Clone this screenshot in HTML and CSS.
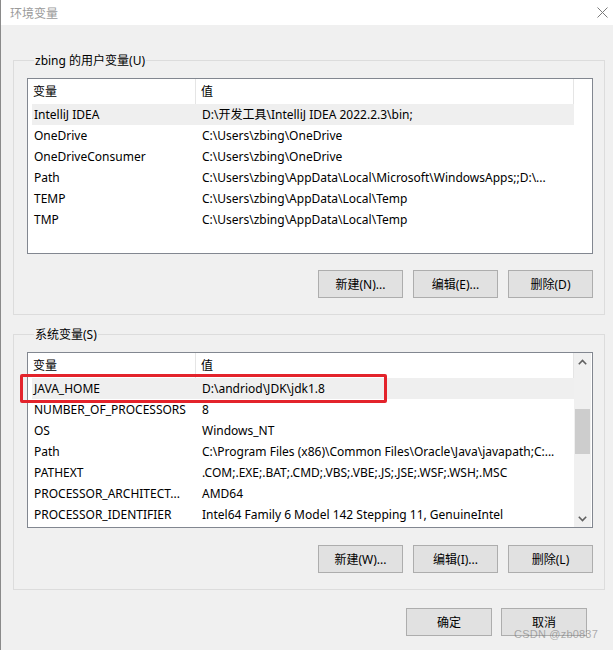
FILE: index.html
```html
<!DOCTYPE html>
<html lang="zh-CN">
<head>
<meta charset="utf-8">
<title>环境变量</title>
<link rel="stylesheet" href="styles.css">
</head>
<body>
<div class="window">
  <div class="titlebar">
    <span class="title">环境变量</span>
    <svg class="close" width="11" height="11" viewBox="0 0 11 11"><path d="M0.5 0.5 L10.5 10.5 M10.5 0.5 L0.5 10.5" stroke="#7a7a7a" stroke-width="1" fill="none"/></svg>
  </div>
  <div class="content">
    <section class="group">
      <div class="group-title">zbing 的用户变量(U)</div>
      <div class="list">
        <div class="list-main">
          <div class="list-header"><div class="hcol1">变量</div><div class="hcol2">值</div></div>
          <div class="rows">
            <div class="row selected"><div class="c1">IntelliJ IDEA</div><div class="c2">D:\开发工具\IntelliJ IDEA 2022.2.3\bin;</div></div>
            <div class="row"><div class="c1">OneDrive</div><div class="c2">C:\Users\zbing\OneDrive</div></div>
            <div class="row"><div class="c1">OneDriveConsumer</div><div class="c2">C:\Users\zbing\OneDrive</div></div>
            <div class="row"><div class="c1">Path</div><div class="c2">C:\Users\zbing\AppData\Local\Microsoft\WindowsApps;;D:\...</div></div>
            <div class="row"><div class="c1">TEMP</div><div class="c2">C:\Users\zbing\AppData\Local\Temp</div></div>
            <div class="row"><div class="c1">TMP</div><div class="c2">C:\Users\zbing\AppData\Local\Temp</div></div>
          </div>
        </div>
      </div>
      <div class="btns">
        <button class="btn">新建(N)...</button>
        <button class="btn">编辑(E)...</button>
        <button class="btn">删除(D)</button>
      </div>
    </section>

    <section class="group group-sys">
      <div class="group-title">系统变量(S)</div>
      <div class="list">
        <div class="list-main">
          <div class="list-header"><div class="hcol1">变量</div><div class="hcol2">值</div></div>
          <div class="rows">
            <div class="row selected"><div class="c1">JAVA_HOME</div><div class="c2">D:\andriod\JDK\jdk1.8</div></div>
            <div class="row"><div class="c1">NUMBER_OF_PROCESSORS</div><div class="c2">8</div></div>
            <div class="row"><div class="c1">OS</div><div class="c2">Windows_NT</div></div>
            <div class="row"><div class="c1">Path</div><div class="c2">C:\Program Files (x86)\Common Files\Oracle\Java\javapath;C:...</div></div>
            <div class="row"><div class="c1">PATHEXT</div><div class="c2">.COM;.EXE;.BAT;.CMD;.VBS;.VBE;.JS;.JSE;.WSF;.WSH;.MSC</div></div>
            <div class="row"><div class="c1">PROCESSOR_ARCHITECT...</div><div class="c2">AMD64</div></div>
            <div class="row"><div class="c1">PROCESSOR_IDENTIFIER</div><div class="c2">Intel64 Family 6 Model 142 Stepping 11, GenuineIntel</div></div>
          </div>
        </div>
        <div class="scrollbar">
          <div class="sb-btn"><svg width="9" height="6" viewBox="0 0 9 6"><polyline points="0.8,5.2 4.5,1.5 8.2,5.2" stroke="#606060" stroke-width="1.6" fill="none"/></svg></div>
          <div class="sb-track"><div class="sb-thumb"></div></div>
          <div class="sb-btn"><svg width="9" height="6" viewBox="0 0 9 6"><polyline points="0.8,0.8 4.5,4.5 8.2,0.8" stroke="#606060" stroke-width="1.6" fill="none"/></svg></div>
        </div>
        <div class="mark"></div>
      </div>
      <div class="btns">
        <button class="btn">新建(W)...</button>
        <button class="btn">编辑(I)...</button>
        <button class="btn">删除(L)</button>
      </div>
    </section>

    <div class="footer">
      <button class="btn btn-main">确定</button>
      <button class="btn btn-main">取消</button>
    </div>
  </div>
  <div class="watermark">CSDN @zb0837</div>
</div>
</body>
</html>
```
FILE: styles.css
```css
html, body {
  margin: 0;
  padding: 0;
  background: #f0f0f0;
}

.window {
  position: relative;
  width: 613px;
  height: 650px;
  box-sizing: border-box;
  border-left: 1px solid #8a8a8a;
  background: #f0f0f0;
  overflow: hidden;
  font-family: "Noto Sans", "Noto Sans CJK SC", sans-serif;
  font-size: 12px;
  color: #000;
}

.titlebar {
  height: 25px;
  background: #fff;
  display: flex;
  align-items: center;
  justify-content: space-between;
  padding: 0 5px 0 9px;
}

.title {
  font-family: "Noto Sans CJK SC", sans-serif;
  font-size: 12px;
  color: #9a9a9a;
}

.close {
  display: block;
}

.content {
  padding: 35px 8px 0 12px;
}

.group {
  border: 1px solid #dcdcdc;
  padding: 0 11px 16px 13px;
}

.group-sys {
  margin-top: 19px;
}

.group-title {
  width: max-content;
  height: 16px;
  line-height: 16px;
  margin: -8px 0 0 7px;
  padding: 0 1px;
  background: #f0f0f0;
}

.list {
  position: relative;
  display: flex;
  height: 176px;
  margin-top: 9px;
  box-sizing: border-box;
  border: 1px solid #828790;
  background: #fff;
}

.list-main {
  width: 546px;
  flex: none;
}

.list-header {
  display: flex;
  width: 546px;
  height: 25px;
  line-height: 25px;
  box-sizing: border-box;
  border-right: 1px solid #e5e5e5;
}

.hcol1 {
  width: 168px;
  box-sizing: border-box;
  padding-left: 5px;
  border-right: 1px solid #e5e5e5;
}

.hcol2 {
  flex: 1;
  padding-left: 5px;
}

.rows {
  margin-left: 4px;
  width: 542px;
}

.row {
  display: flex;
  height: 21px;
  line-height: 21px;
  white-space: nowrap;
}

.row.selected {
  background: #efefef;
}

.c1 {
  width: 164px;
  box-sizing: border-box;
  padding-left: 2px;
  overflow: hidden;
}

.c2 {
  flex: 1;
  padding-left: 6px;
  overflow: hidden;
}

.scrollbar {
  width: 17px;
  display: flex;
  flex-direction: column;
  background: #f0f0f0;
}

.sb-btn {
  height: 17px;
  display: flex;
  align-items: center;
  justify-content: center;
}

.sb-btn svg {
  display: block;
}

.sb-track {
  flex: 1;
  padding: 39px 1px 0 1px;
}

.sb-thumb {
  height: 45px;
  background: #cdcdcd;
}

.mark {
  position: absolute;
  left: -8px;
  top: 21px;
  width: 367px;
  height: 29px;
  box-sizing: border-box;
  border: 3px solid #e3232b;
  border-radius: 2px;
}

.btns {
  display: flex;
  justify-content: flex-end;
  gap: 10px;
  margin-top: 16px;
}

.group-sys .btns {
  margin-top: 17px;
}

.btn {
  width: 85px;
  height: 28px;
  padding: 0;
  box-sizing: border-box;
  border: 1px solid #adadad;
  background: #e1e1e1;
  font-family: "Noto Sans", "Noto Sans CJK SC", sans-serif;
  font-size: 12px;
  color: #000;
}

.footer {
  display: flex;
  justify-content: flex-end;
  gap: 9px;
  margin-top: 18px;
  padding-right: 18px;
}

.btn-main {
  width: 86px;
}

.watermark {
  position: absolute;
  right: 15px;
  top: 628px;
  font-family: "Liberation Sans", sans-serif;
  font-size: 11px;
  line-height: 13px;
  color: rgba(110, 110, 110, 0.55);
  letter-spacing: 0.2px;
}
```
